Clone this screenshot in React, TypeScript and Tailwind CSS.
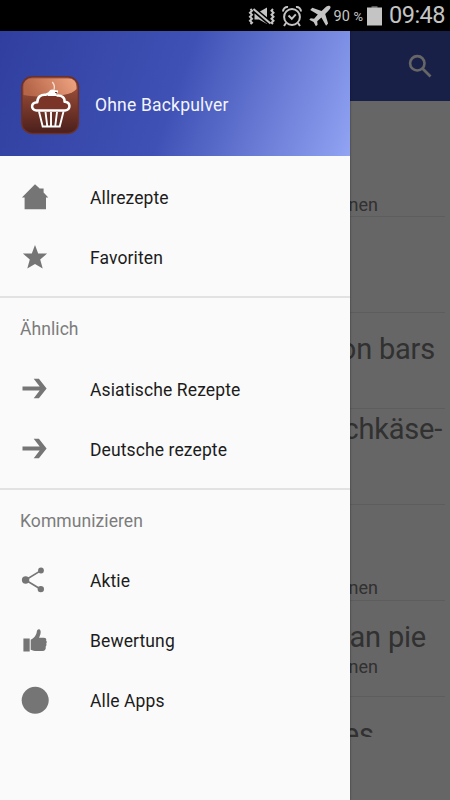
import type { ReactNode } from 'react'

type Row = {
    title?: string
    titleClass?: string
    info?: string
    infoClass?: string
}

const rows: Row[] = [
    { info: 'nen', infoClass: 'pt-[73px]' },
    {},
    { title: 'on bars', titleClass: 'pt-[18px] pr-[10px]' },
    { title: 'chkäse-', titleClass: 'pt-[2px] pr-[3px]' },
    { info: 'nen', infoClass: 'pt-[73px]' },
    { title: 'can pie', titleClass: 'pt-[18px] pr-[19px]', info: 'nen', infoClass: 'pt-[2px]' },
]

function HomeIcon() {
    return (
        <svg width="28" height="28" viewBox="0 0 28 28" fill="currentColor">
            <path d="M14 1.200 19 5.800V5.400h3.600v4.200L27.300 14.500H25v11.700H3.600V14.500H.9z" />
        </svg>
    )
}

function StarIcon() {
    return (
        <svg width="28" height="28" viewBox="0 0 28 28" fill="currentColor">
            <path d="M14 2 17.200 10.600h8.900l-6.900 5.800 2.500 9.100L14 20.900 6.300 25.500l2.500-9.100L1.900 10.600h8.900z" />
        </svg>
    )
}

function ArrowIcon() {
    return (
        <svg width="28" height="28" viewBox="0 0 28 28" fill="currentColor">
            <path d="M1.500 11.500h17.200L12.700 3.700h5.200L25.600 13.400 17.900 23.200h-5.200l6-7.800H1.500z" />
        </svg>
    )
}

function ShareIcon() {
    return (
        <svg width="28" height="28" viewBox="0 0 28 28" fill="currentColor">
            <path d="M19.800 4.600 4.500 14l15.300 9.200" fill="none" stroke="currentColor" strokeWidth="1.700" />
            <circle cx="4.600" cy="14" r="3.700" />
            <circle cx="20" cy="4.500" r="2.900" />
            <circle cx="19.800" cy="23.100" r="3.200" />
        </svg>
    )
}

function ThumbIcon() {
    return (
        <svg width="28" height="28" viewBox="0 0 28 28" fill="currentColor">
            <path d="M2.400 12.600h6.300v12.800H2.400zM9.700 13.800c3-1.200 5.100-3.900 5.900-6.700.3-1.500.3-3.800 2.100-3.800 2.100 0 2.300 2.700 1.700 4.900l-1.300 3.500h4.600c2.200 0 3 1 2.400 2.700.9.900.9 2.300.1 3.200.5 1 .3 2.300-.5 3 .4 2.900-.7 4.500-3.200 4.500h-5.700c-2.300 0-4.200-.6-6.100-1.300z" />
        </svg>
    )
}

function DotIcon() {
    return (
        <svg width="28" height="28" viewBox="0 0 28 28" fill="currentColor">
            <circle cx="14.200" cy="14.200" r="13.500" />
        </svg>
    )
}

function CupcakeLogo() {
    return (
        <svg width="60" height="60" viewBox="0 0 60 60">
            <defs>
                <linearGradient id="cake" x1="0" y1="0" x2="0" y2="1">
                    <stop offset="0" stopColor="#a85a40" />
                    <stop offset="0.5" stopColor="#7b3a2b" />
                    <stop offset="1" stopColor="#4a1f1c" />
                </linearGradient>
                <linearGradient id="gloss" x1="0" y1="0.2" x2="1" y2="0">
                    <stop offset="0" stopColor="#b56548" />
                    <stop offset="1" stopColor="#f0a582" />
                </linearGradient>
            </defs>
            <rect x="1.800" y="1.800" width="56.600" height="56.600" rx="10.500" fill="url(#cake)" stroke="#6b3029" strokeWidth="1.500" />
            <path d="M3.500 20V12q0-8.500 8.500-8.500h36q8.500 0 8.500 8.500v2C51 22 22 23 3.500 20z" fill="url(#gloss)" />
            <path
                d="M16.500 35.500c-6-1-6-7.800.8-8.300 0-5.500 4-8 8.500-7.500 3-2.200 10-2 11.500.8 4.500-.3 7.700 2.200 7.200 6.200 6.500.5 6.500 7.800.5 8.800z"
                fill="#7b3528"
                stroke="#fff"
                strokeWidth="2.500"
                strokeLinejoin="round"
            />
            <path d="M19 36.500 22.700 51.500h17L43.500 36.500M25.500 37l1.800 14.500M31 37v14.500M37 37l-1.800 14.500" fill="none" stroke="#fff" strokeWidth="1.900" />
            <path d="M28.500 17q2.500-3.500 5.500-2l4 .5v5.500h-10.500z" fill="#fff" />
            <path d="M33.800 15c1.300-3 .5-5.500-1.500-8" fill="none" stroke="#f7dfd4" strokeWidth="1.300" />
            <path d="M35 17.500h2v2" fill="none" stroke="#7b3528" strokeWidth="1" />
        </svg>
    )
}

function StatusBar() {
    return (
        <header className="flex h-[31px] w-full shrink-0 items-center justify-end bg-black pr-[5px] text-[#c4c4c4]">
            <svg className="mr-[5px] shrink-0" width="28" height="24" viewBox="0 0 28 24" fill="currentColor">
                <path d="M6.500 8h4.500l8-4.500v16.500l-8-4.500H6.500z" />
                <path d="M4.500 4.500 22.500 19.500" stroke="#000" strokeWidth="5" />
                <path d="M5.500 5 22.500 19.500" stroke="currentColor" strokeWidth="2" />
                <path d="m2.500 5 1.500 1.700-2 2 2 2-2 2 2 2-2 2 2 2-1.500 1.300M25 5l-1.500 1.700 2 2-2 2 2 2-2 2 2 2-2 2 1.500 1.300" fill="none" stroke="currentColor" strokeWidth="2" />
            </svg>
            <svg className="mr-[6px] shrink-0" width="22" height="24" viewBox="0 0 22 24" fill="none" stroke="currentColor" strokeWidth="2">
                <circle cx="11" cy="13" r="7.900" />
                <path d="m7.500 11.500 3.300 3.300 4-4.500M2 7.500c0-3 2.500-5 5-4.500M20 7.500c0-3-2.500-5-5-4.500M5 19l-2 3M17 19l2 3" />
            </svg>
            <svg className="mr-[3px] shrink-0" width="22" height="24" viewBox="0 0 22 24" fill="currentColor">
                <path d="M21 2.200c-1.300-1.200-3.500 0-5 1.500l-3.400 3.200L3.300 3.700 1.200 6l7.600 4.500-3.700 4.200-3.400-.5L.3 15.800l4.300 2.200 2.300 4.200 1.700-1.500-.4-3.500 4.200-3.700 4.700 8.200 2-2.200-2.900-9.500 3.200-3.300c1.500-1.500 2.900-3.400 1.700-4.500z" />
            </svg>
            <span className="mr-[4px] whitespace-nowrap pt-[3px] text-[14.500px]">
                90 <span className="text-[13px]">%</span>
            </span>
            <svg className="mr-[7px] shrink-0" width="15" height="22" viewBox="0 0 15 22" fill="currentColor">
                <path d="M4.500 1h6v2h-6z" fill="#555" />
                <path d="M0 2.500h15v18H0z" />
            </svg>
            <span className="pt-px text-[23.500px] tracking-[-0.500px]">09:48</span>
        </header>
    )
}

function MenuItem({ icon, label }: { icon: ReactNode; label: string }) {
    return (
        <li className="flex h-[60px] items-center pl-[21px] text-[#757575]">
            {icon}
            <span className="ml-[41px] pt-[2px] text-[17.500px] tracking-[0.110px] text-[#1c1c1c]">{label}</span>
        </li>
    )
}

function Drawer() {
    return (
        <nav className="absolute top-0 left-0 h-full w-[350px] bg-[#fafafa] shadow-[0_0_2px_rgba(0,0,0,0.5)]">
            <div className="flex h-[125px] items-center bg-[linear-gradient(110deg,#303f9f_0%,#3f51b5_50%,#8c9eef_97%,#93a4f2_100%)] pt-[22px] pl-[20px]">
                <CupcakeLogo />
                <span className="ml-[15px] pt-[2px] text-[17.500px] tracking-[0.190px] text-[#f4f5fb]">Ohne Backpulver</span>
            </div>
            <ul className="h-[142px] border-b-2 border-[#e2e2e2] pt-[11px]">
                <MenuItem icon={<HomeIcon />} label="Allrezepte" />
                <MenuItem icon={<StarIcon />} label="Favoriten" />
            </ul>
            <h2 className="flex h-[61px] items-center pt-px pl-[20px] text-[17.500px] tracking-[0.080px] text-[#7c7c7c]">Ähnlich</h2>
            <ul className="h-[131px] border-b-2 border-[#e2e2e2]">
                <MenuItem icon={<ArrowIcon />} label="Asiatische Rezepte" />
                <MenuItem icon={<ArrowIcon />} label="Deutsche rezepte" />
            </ul>
            <h2 className="flex h-[60px] items-center pt-[2px] pl-[20px] text-[17.500px] tracking-[0.080px] text-[#7c7c7c]">Kommunizieren</h2>
            <ul>
                <MenuItem icon={<ShareIcon />} label="Aktie" />
                <MenuItem icon={<ThumbIcon />} label="Bewertung" />
                <MenuItem icon={<DotIcon />} label="Alle Apps" />
            </ul>
        </nav>
    )
}

export default function App() {
    return (
        <div className="flex h-[800px] w-[450px] flex-col overflow-hidden bg-black font-['Roboto',sans-serif]">
            <StatusBar />
            <div className="relative h-[769px] overflow-hidden bg-white">
                <div className="flex h-[70px] items-center justify-end bg-[#3f51b5] pr-[18px]">
                    <svg width="24" height="24" viewBox="0 0 24 24" fill="none" stroke="#fff" strokeWidth="2.600">
                        <circle cx="9.300" cy="9.300" r="7.200" />
                        <path d="m14.500 14.500 8 8" />
                    </svg>
                </div>
                <main className="h-[636px] overflow-hidden pt-[20.500px] pr-[5px]">
                    {rows.map((row, i) => (
                        <div key={i} className="h-[95.900px] border-b border-[#e8e8e8] text-right text-[#7a7a7a]">
                            {row.title && <div className={`text-[29px] leading-[36px] tracking-[-0.200px] ${row.titleClass}`}>{row.title}</div>}
                            {row.info && <div className={`pr-[67px] text-[18px] leading-[20px] ${row.infoClass}`}>{row.info}</div>}
                        </div>
                    ))}
                    <div className="pt-[19px] pr-[71px] text-right text-[29px] leading-[36px] text-[#7a7a7a]">es</div>
                </main>
                <div className="absolute inset-0 bg-black/60" />
                <Drawer />
            </div>
        </div>
    )
}
